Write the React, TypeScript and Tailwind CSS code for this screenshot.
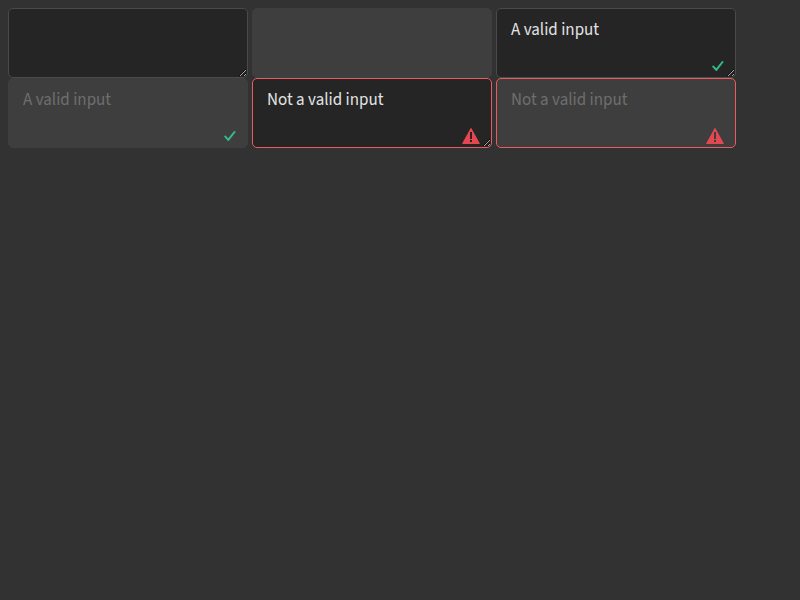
type FieldProps = {
  label: string;
  value?: string;
  disabled?: boolean;
  state?: "valid" | "invalid";
};

function Field({ label, value = "", disabled = false, state }: FieldProps) {
  const border =
    state === "invalid" ? "border-[#ec5b62]" : disabled ? "border-[#3e3e3e]" : "border-[#4a4a4a]";
  const tone = disabled
    ? "resize-none bg-[#3e3e3e] text-[#6e6e6e]"
    : "resize bg-[#252525] text-[#e3e3e3]";

  return (
    <div className="relative flex">
      <textarea
        aria-label={label}
        aria-invalid={state === "invalid"}
        defaultValue={value}
        disabled={disabled}
        className={`h-[70px] w-60 overflow-auto rounded-[5px] border px-3.5 py-2 font-['Source_Sans_3','Noto_Sans',sans-serif] text-[17px] leading-[26px] outline-none ${border} ${tone}`}
      />
      {state === "valid" && (
        <svg viewBox="0 0 12 12" className="pointer-events-none absolute right-3 bottom-1.5 size-3" aria-hidden="true">
          <path d="M1.3 6.6 4.3 9.9 10.5 2" fill="none" stroke="#33bb8e" strokeWidth="2" strokeLinecap="round" strokeLinejoin="round" />
        </svg>
      )}
      {state === "invalid" && (
        <svg viewBox="0 0 18 18" className="pointer-events-none absolute right-3 bottom-[3px] size-[18px]" aria-hidden="true">
          <path
            fill="#e34850"
            fillRule="evenodd"
            d="M8.56 1.29.29 16.34A.5.5 0 0 0 .73 17h16.54a.5.5 0 0 0 .44-.66L9.44 1.29a.5.5 0 0 0-.88 0ZM8 5h2v7H8Zm0 8h2v2H8Z"
          />
        </svg>
      )}
    </div>
  );
}

export default function App() {
  return (
    <main className="min-h-screen bg-[#323232] p-2">
      <div className="flex flex-wrap gap-x-1">
        <Field label="Empty" />
        <Field label="Empty, disabled" disabled />
        <Field label="Valid" value="A valid input" state="valid" />
        <Field label="Valid, disabled" value="A valid input" state="valid" disabled />
        <Field label="Invalid" value="Not a valid input" state="invalid" />
        <Field label="Invalid, disabled" value="Not a valid input" state="invalid" disabled />
      </div>
    </main>
  );
}
